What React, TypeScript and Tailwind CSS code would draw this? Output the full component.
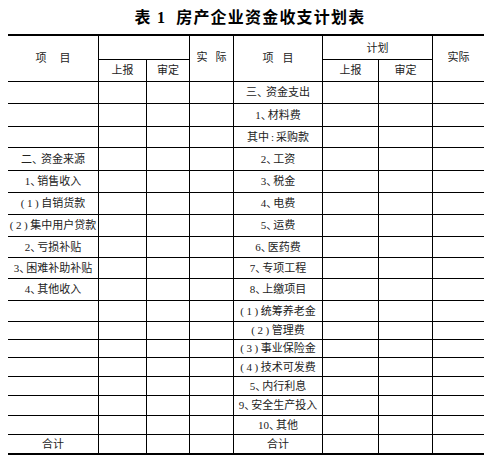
import React from "react";

const rows: [string, string][] = [
  ["", "三、资金支出"],
  ["", "1、材料费"],
  ["", "其中:采购款"],
  ["二、资金来源", "2、工资"],
  ["1、销售收入", "3、税金"],
  ["(1)自销货款", "4、电费"],
  ["(2)集中用户贷款", "5、运费"],
  ["2、亏损补贴", "6、医药费"],
  ["3、困难补助补贴", "7、专项工程"],
  ["4、其他收入", "8、上缴项目"],
  ["", "(1)统筹养老金"],
  ["", "(2)管理费"],
  ["", "(3)事业保险金"],
  ["", "(4)技术可发费"],
  ["", "5、内行利息"],
  ["", "9、安全生产投入"],
  ["", "10、其他"],
  ["合计", "合计"],
];

function Label({ text }: { text: string }) {
  const m = text.match(/^(\(\d+\))(.*)$/);
  if (m) {
    return (
      <span className="whitespace-nowrap">
        <span className="tracking-[2.5px]">{m[1]}</span>
        {m[2]}
      </span>
    );
  }
  const c = text.match(/^(其中):(.*)$/);
  if (c) {
    return (
      <span className="whitespace-nowrap">
        {c[1]}
        <span className="px-[2px]">:</span>
        {c[2]}
      </span>
    );
  }
  const k = text.match(/^(.+?)、(.*)$/);
  if (k) {
    const chinese = !/^\d+$/.test(k[1]);
    return (
      <span className="whitespace-nowrap">
        {k[1]}
        <span className={chinese ? "tracking-[-2px]" : "tracking-[-4px]"}>、</span>
        {k[2]}
      </span>
    );
  }
  return <span className="whitespace-nowrap">{text}</span>;
}

export default function App() {
  const cell = "flex items-center justify-center border-black";
  return (
    <div className="w-[484px] h-[460px] bg-white text-[#222] font-['Liberation_Serif','Noto_Sans_CJK_SC',serif]">
      <div className="h-[34px] flex items-center justify-center pl-[16px] pt-[2px] text-[16px] font-bold text-black tracking-[1.2px] font-['Liberation_Serif','Noto_Sans_CJK_SC',serif]">
        <span>表 1</span>
        <span className="ml-[10px]">房产企业资金收支计划表</span>
      </div>
      <div className="ml-[8px] w-[476px] border-t-2 border-b-2 border-black grid grid-cols-[91px_48px_43px_44px_89px_56px_54px_51px] grid-rows-[24px_22px_22px_23px_21px_23px_22px_22px_22px_21px_21px_22px_21px_18px_18px_19px_19px_20px_19px_18px] text-[11px] leading-none">
        {/* header */}
        <div className={`${cell} row-span-2 border-r border-b gap-[13px]`}>
          <span>项</span>
          <span>目</span>
        </div>
        <div className={`${cell} col-span-2 border-r border-b`}></div>
        <div className={`${cell} row-span-2 border-r border-b gap-[8px] pb-[2px]`}>
          <span>实</span>
          <span>际</span>
        </div>
        <div className={`${cell} row-span-2 border-r border-b gap-[9px]`}>
          <span>项</span>
          <span>目</span>
        </div>
        <div className={`${cell} col-span-2 border-r border-b pt-[2px]`}>计划</div>
        <div className={`${cell} row-span-2 border-b pb-[2px]`}>实际</div>
        <div className={`${cell} border-r border-b`}>上报</div>
        <div className={`${cell} border-r border-b`}>审定</div>
        <div className={`${cell} border-r border-b`}>上报</div>
        <div className={`${cell} border-r border-b`}>审定</div>
        {/* body */}
        {rows.map(([l, r], i) => {
          const last = i === rows.length - 1;
          const b = last ? "" : "border-b";
          return (
            <React.Fragment key={i}>
              <div className={`${cell} border-r ${b}`}>
                {l && <Label text={l} />}
              </div>
              <div className={`${cell} border-r ${b}`}></div>
              <div className={`${cell} border-r ${b}`}></div>
              <div className={`${cell} border-r ${b}`}></div>
              <div className={`${cell} border-r ${b}`}>
                <Label text={r} />
              </div>
              <div className={`${cell} border-r ${b}`}></div>
              <div className={`${cell} border-r ${b}`}></div>
              <div className={`${cell} ${b}`}></div>
            </React.Fragment>
          );
        })}
      </div>
    </div>
  );
}
